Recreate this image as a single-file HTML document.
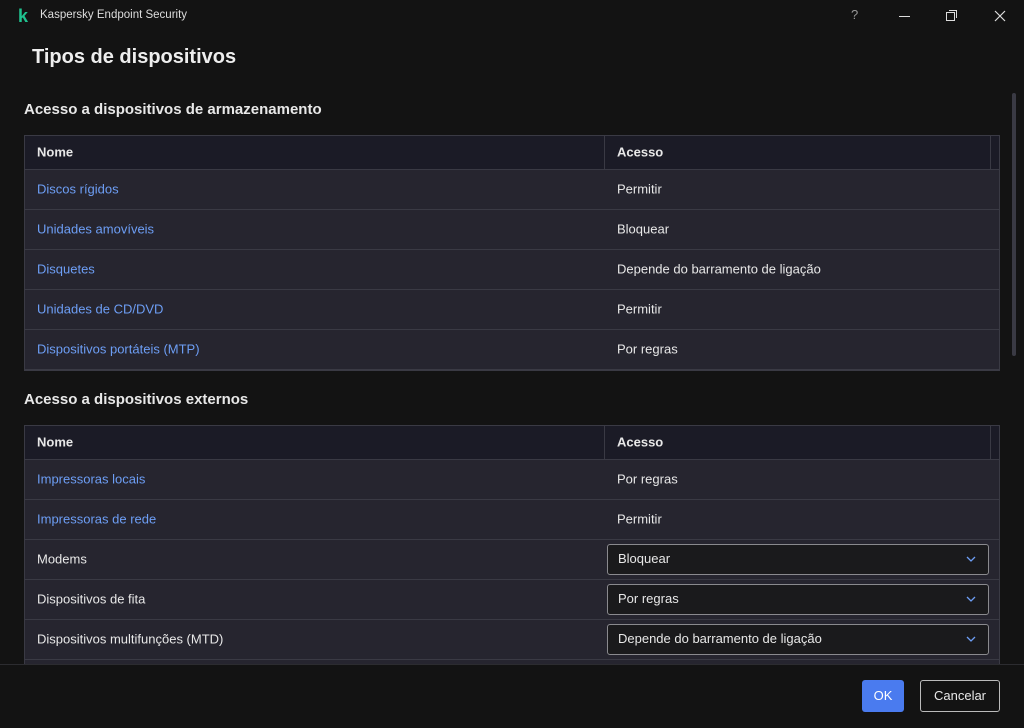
<!DOCTYPE html>
<html><head><style>
*{margin:0;padding:0;box-sizing:border-box}
body{width:1024px;height:728px;background:#131313;font-family:"Liberation Sans",sans-serif;color:#e8e8e8;position:relative;overflow:hidden}
.abs{position:absolute}
.tbl{position:absolute;left:24px;width:976px;border:1px solid #3a3a44;background:#26252f;overflow:hidden}
.hd{height:34px;background:#1b1b26;border-bottom:1px solid #3a3a44;position:relative;font-weight:bold;font-size:13px}
.row{height:40px;border-bottom:1px solid #3a3a44;position:relative;font-size:13px}
.c1{position:absolute;left:12px;top:50%;transform:translateY(-50%);margin-top:-1px}
.c2{position:absolute;left:592px;top:50%;transform:translateY(-50%);margin-top:-1px}
.hd .sep{position:absolute;left:579px;top:0;bottom:0;border-left:1px solid #3a3a44}
.hd .sep2{position:absolute;left:965px;top:0;bottom:0;border-left:1px solid #3a3a44}
a{color:#6d9ef5;text-decoration:none}
.sel{position:absolute;left:582px;top:4px;width:382px;height:31px;border:1px solid #8a8a8e;border-radius:3px;background:#1a1a1c;font-size:13px;padding:6px 10px}
.sel svg{position:absolute;right:12px;top:11px}
</style></head><body>
<div class="abs" style="left:18px;top:6px;color:#1fc28f;font-weight:bold;font-size:18px">k</div>
<div class="abs" style="left:40px;top:9px;font-size:11.5px;color:#ddd">Kaspersky Endpoint Security</div>
<div class="abs" style="left:851px;top:7px;font-size:13px;color:#999">?</div>
<div class="abs" style="left:899px;top:16px;width:11px;height:1px;background:#ddd"></div>
<div class="abs" style="left:946px;top:12px;width:9px;height:9px;border:1px solid #ddd"></div>
<div class="abs" style="left:949px;top:10px;width:8px;height:8px;border-top:1px solid #ddd;border-right:1px solid #ddd"></div>
<svg class="abs" style="left:994px;top:10px" width="12" height="12"><path d="M1 1L11 11M11 1L1 11" stroke="#ddd" stroke-width="1.2"/></svg>
<div class="abs" style="left:32px;top:46px;font-size:20px;font-weight:bold;color:#eee">Tipos de dispositivos</div>
<div class="abs" style="left:1012px;top:93px;width:4px;height:263px;background:#3a3a44;border-radius:2px"></div>
<div class="abs" style="left:24px;top:101px;font-size:15px;font-weight:bold">Acesso a dispositivos de armazenamento</div>
<div class="tbl" style="top:135px;height:236px">
<div class="hd"><span class="c1">Nome</span><span class="c2">Acesso</span><div class="sep"></div><div class="sep2"></div></div>
<div class="row"><a class="c1">Discos rígidos</a><span class="c2">Permitir</span></div>
<div class="row"><a class="c1">Unidades amovíveis</a><span class="c2">Bloquear</span></div>
<div class="row"><a class="c1">Disquetes</a><span class="c2">Depende do barramento de ligação</span></div>
<div class="row"><a class="c1">Unidades de CD/DVD</a><span class="c2">Permitir</span></div>
<div class="row"><a class="c1">Dispositivos portáteis (MTP)</a><span class="c2">Por regras</span></div>
</div>
<div class="abs" style="left:24px;top:391px;font-size:15px;font-weight:bold">Acesso a dispositivos externos</div>
<div class="tbl" style="top:425px;height:260px">
<div class="hd"><span class="c1">Nome</span><span class="c2">Acesso</span><div class="sep"></div><div class="sep2"></div></div>
<div class="row"><a class="c1">Impressoras locais</a><span class="c2">Por regras</span></div>
<div class="row"><a class="c1">Impressoras de rede</a><span class="c2">Permitir</span></div>
<div class="row"><span class="c1">Modems</span><div class="sel">Bloquear<svg width="10" height="6"><path d="M1 1L5 5L9 1" stroke="#6d9ef5" fill="none" stroke-width="1.3"/></svg></div></div>
<div class="row"><span class="c1">Dispositivos de fita</span><div class="sel">Por regras<svg width="10" height="6"><path d="M1 1L5 5L9 1" stroke="#6d9ef5" fill="none" stroke-width="1.3"/></svg></div></div>
<div class="row"><span class="c1">Dispositivos multifunções (MTD)</span><div class="sel">Depende do barramento de ligação<svg width="10" height="6"><path d="M1 1L5 5L9 1" stroke="#6d9ef5" fill="none" stroke-width="1.3"/></svg></div></div>
<div class="row"><div class="sel"></div></div>
</div>
<div class="abs" style="left:0;top:664px;width:1024px;height:64px;background:#131313;border-top:1px solid #2c2c30"></div>
<div class="abs" style="left:862px;top:680px;width:42px;height:32px;background:#4a7bef;border-radius:3px;font-size:13px;color:#fff;text-align:center;line-height:32px">OK</div>
<div class="abs" style="left:920px;top:680px;width:80px;height:32px;border:1px solid #bbb;border-radius:3px;font-size:13px;text-align:center;line-height:30px">Cancelar</div>
</body></html>
